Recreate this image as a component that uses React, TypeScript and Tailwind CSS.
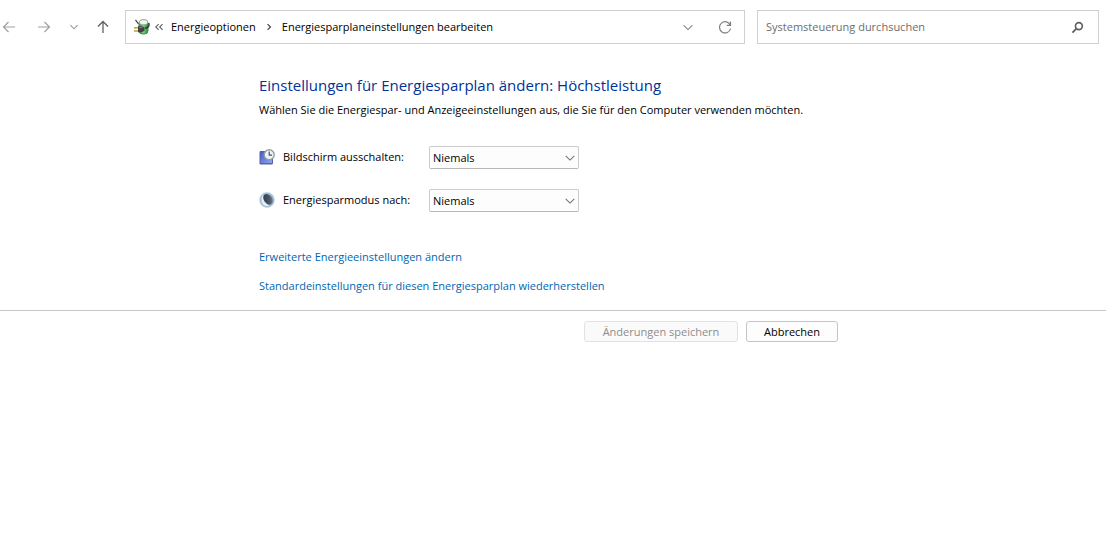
import type { ReactNode } from "react";

const plans = [
  { id: "display", label: "Bildschirm ausschalten:", icon: <DisplayIcon /> },
  { id: "sleep", label: "Energiesparmodus nach:", icon: <MoonIcon /> },
];

const links = [
  "Erweiterte Energieeinstellungen ändern",
  "Standardeinstellungen für diesen Energiesparplan wiederherstellen",
];

function DisplayIcon() {
  return (
    <svg className="size-4 shrink-0" viewBox="0 0 16 16" aria-hidden="true">
      <defs>
        <linearGradient id="screen" x1="0" y1="0" x2="1" y2="1">
          <stop offset="0" stopColor="#4257c4" />
          <stop offset="1" stopColor="#93a9f8" />
        </linearGradient>
      </defs>
      <path d="M1 2.500h12.500v12h-12.500z" fill="url(#screen)" stroke="#5560b4" />
      <path d="M0.500 3v12" stroke="#a9b0d8" />
      <path d="M1 15h12.500" stroke="#5a669e" />
      <circle cx="10.200" cy="5.800" r="5" fill="#f1f3f5" stroke="#959ca3" strokeWidth="1.400" />
      <path d="M10.200 2.600v3.500H13" fill="none" stroke="#4b5560" strokeWidth="1.200" />
    </svg>
  );
}

function MoonIcon() {
  return (
    <svg className="size-4 shrink-0" viewBox="0 0 16 16" aria-hidden="true">
      <defs>
        <radialGradient id="halo">
          <stop offset="0.5" stopColor="#7f95ac" />
          <stop offset="0.85" stopColor="#a9c0d6" />
          <stop offset="1" stopColor="#cddced" />
        </radialGradient>
        <linearGradient id="shade" x1="0" y1="0" x2="1" y2="1">
          <stop offset="0" stopColor="#2f3743" />
          <stop offset="0.6" stopColor="#4b5869" />
          <stop offset="1" stopColor="#7f93a8" />
        </linearGradient>
      </defs>
      <circle cx="8" cy="8" r="7.900" fill="url(#halo)" />
      <path d="M4.500 2.500C1.800 5 1.500 10 4.400 12.800c1.800 1.500 4.200 1.800 6.200 1C7 12.500 4 8 4.500 2.500z" fill="#e4eff9" />
      <ellipse cx="9" cy="7.200" rx="4" ry="5.800" fill="url(#shade)" transform="rotate(-38 9 7.200)" />
    </svg>
  );
}

function PowerIcon() {
  return (
    <svg className="size-4 shrink-0" viewBox="0 0 16 16" aria-hidden="true">
      <defs>
        <linearGradient id="battery" x1="0" y1="0" x2="1" y2="0">
          <stop offset="0" stopColor="#3a9a48" />
          <stop offset="0.5" stopColor="#6fd878" />
          <stop offset="1" stopColor="#2a8a3c" />
        </linearGradient>
      </defs>
      <rect x="5" y="1" width="9" height="14" rx="3.500" fill="url(#battery)" stroke="#4f7a55" />
      <ellipse cx="9.500" cy="3.200" rx="4.200" ry="2.500" fill="#eef6ee" stroke="#8d9a8d" strokeWidth="0.700" />
      <path d="M1.500 0.800l3 4" stroke="#444" strokeWidth="1.200" />
      <path d="M11 9c3.500 0 4.500-2 3.800-5" fill="none" stroke="#303030" strokeWidth="1.400" />
      <path d="M0 8.700h4.500M0 12h4.500" stroke="#bda436" strokeWidth="1.600" />
      <path d="M4 7.200h4l2.500 1.300v3L8 13.300H4z" fill="#453d42" />
      <path d="M5 8.700h3.500" stroke="#8a8288" />
    </svg>
  );
}

function Stroke({ children, className }: { children: ReactNode; className: string }) {
  return (
    <svg
      className={`shrink-0 ${className}`}
      viewBox="0 0 14 14"
      fill="none"
      stroke="currentColor"
      strokeWidth="1.2"
      aria-hidden="true"
    >
      {children}
    </svg>
  );
}

function NavBar() {
  return (
    <header className="flex items-center gap-3 pt-[10px] pr-[7px]">
      <nav className="flex w-[113px] shrink-0 items-center">
        <button aria-label="Zurück" className="ml-[2px] text-[#a0a0a0]">
          <Stroke className="size-[14px]">
            <path d="M13 7H1.500M6.500 2L1.500 7l5 5" />
          </Stroke>
        </button>
        <button aria-label="Vorwärts" className="ml-[21px] text-[#a0a0a0]">
          <Stroke className="size-[14px]">
            <path d="M1 7h11.500M7.500 2l5 5-5 5" />
          </Stroke>
        </button>
        <button aria-label="Zuletzt besucht" className="ml-[18px] text-[#9c9c9c]">
          <Stroke className="size-[10px]">
            <path d="M2 4.500l5 5 5-5" strokeWidth="1.600" />
          </Stroke>
        </button>
        <button aria-label="Nach oben" className="ml-[17px] text-[#606060]">
          <Stroke className="size-[14px]">
            <path d="M7 13V1.500M2 6.500l5-5 5 5" strokeWidth="1.300" />
          </Stroke>
        </button>
      </nav>

      <div className="flex h-[34px] flex-1 items-center border border-[#d0d0d0] pr-3 pl-2">
        <PowerIcon />
        <Stroke className="ml-[4px] size-[10px] text-[#606060]">
          <path d="M6.500 3L2.500 7l4 4M12 3L8 7l4 4" strokeWidth="1.500" />
        </Stroke>
        <button className="ml-[7px]">Energieoptionen</button>
        <Stroke className="mx-2 size-[10px] text-[#505050]">
          <path d="M5 3l4 4-4 4" strokeWidth="1.900" />
        </Stroke>
        <button className="whitespace-nowrap">Energiesparplaneinstellungen bearbeiten</button>
        <button aria-label="Vorherige Orte" className="ml-auto text-[#808080]">
          <Stroke className="size-[12px]">
            <path d="M2 5l5 5 5-5" />
          </Stroke>
        </button>
        <button aria-label="Aktualisieren" className="ml-6 text-[#808080]">
          <Stroke className="size-[14px]">
            <path d="M12.300 5.200A5.600 5.600 0 1 0 12.600 8.500M12.500 1.500v3.800H8.700" />
          </Stroke>
        </button>
      </div>

      <div className="flex h-[34px] w-[342px] items-center border border-[#d0d0d0] pr-[14px] pl-2">
        <input
          type="text"
          aria-label="Systemsteuerung durchsuchen"
          placeholder="Systemsteuerung durchsuchen"
          className="min-w-0 flex-1 outline-none placeholder:text-[#6d6d6d]"
        />
        <button aria-label="Suchen" className="text-[#606060]">
          <Stroke className="size-[13px]">
            <circle cx="8.500" cy="5.500" r="3.700" strokeWidth="1.800" />
            <path d="M5.800 8.200L1.500 12.500" strokeWidth="2" />
          </Stroke>
        </button>
      </div>
    </header>
  );
}

export default function App() {
  return (
    <div className="min-h-screen bg-white font-['Open_Sans',sans-serif] text-[11px] leading-4 text-black">
      <NavBar />

      <main>
        <div className="mx-auto max-w-[588px] pt-[30px] pb-4">
          <h1 className="text-[15px] leading-[22px] text-[#003399]">
            Einstellungen für Energiesparplan ändern: Höchstleistung
          </h1>
          <p className="mt-[6px]">
            Wählen Sie die Energiespar- und Anzeigeeinstellungen aus, die Sie für den Computer
            verwenden möchten.
          </p>

          <div className="mt-7 flex flex-col gap-5">
            {plans.map((plan) => (
              <div key={plan.id} className="flex items-center">
                <label htmlFor={plan.id} className="flex w-[170px] items-center gap-2 pb-[2px]">
                  {plan.icon}
                  {plan.label}
                </label>
                <div className="relative w-[150px]">
                  <select
                    id={plan.id}
                    className="h-[23px] w-full appearance-none rounded-[2px] border border-[#cccccc] border-b-[#b8b8b8] bg-[#fdfdfd] pl-[3px]"
                  >
                    <option>Niemals</option>
                  </select>
                  <Stroke className="pointer-events-none absolute top-[6px] right-[3px] size-[12px] text-[#707070]">
                    <path d="M2 4.500l5 5 5-5" />
                  </Stroke>
                </div>
              </div>
            ))}
          </div>

          <div className="mt-[37px] flex flex-col items-start gap-[13px]">
            {links.map((link) => (
              <a key={link} href="#" className="text-[#0066b4]">
                {link}
              </a>
            ))}
          </div>
        </div>

        <div className="border-t border-[#c8c8c8]">
          <div className="mx-auto flex max-w-[588px] justify-end gap-2 pt-[10px] pr-[9px]">
            <button
              disabled
              className="h-[21px] w-[154px] rounded-[3px] border border-[#e2e2e2] bg-[#fafafa] text-[#8c8c8c]"
            >
              Änderungen speichern
            </button>
            <button className="h-[21px] w-[92px] rounded-[3px] border border-[#c4c4c4] bg-[#fdfdfd]">
              Abbrechen
            </button>
          </div>
        </div>
      </main>
    </div>
  );
}
